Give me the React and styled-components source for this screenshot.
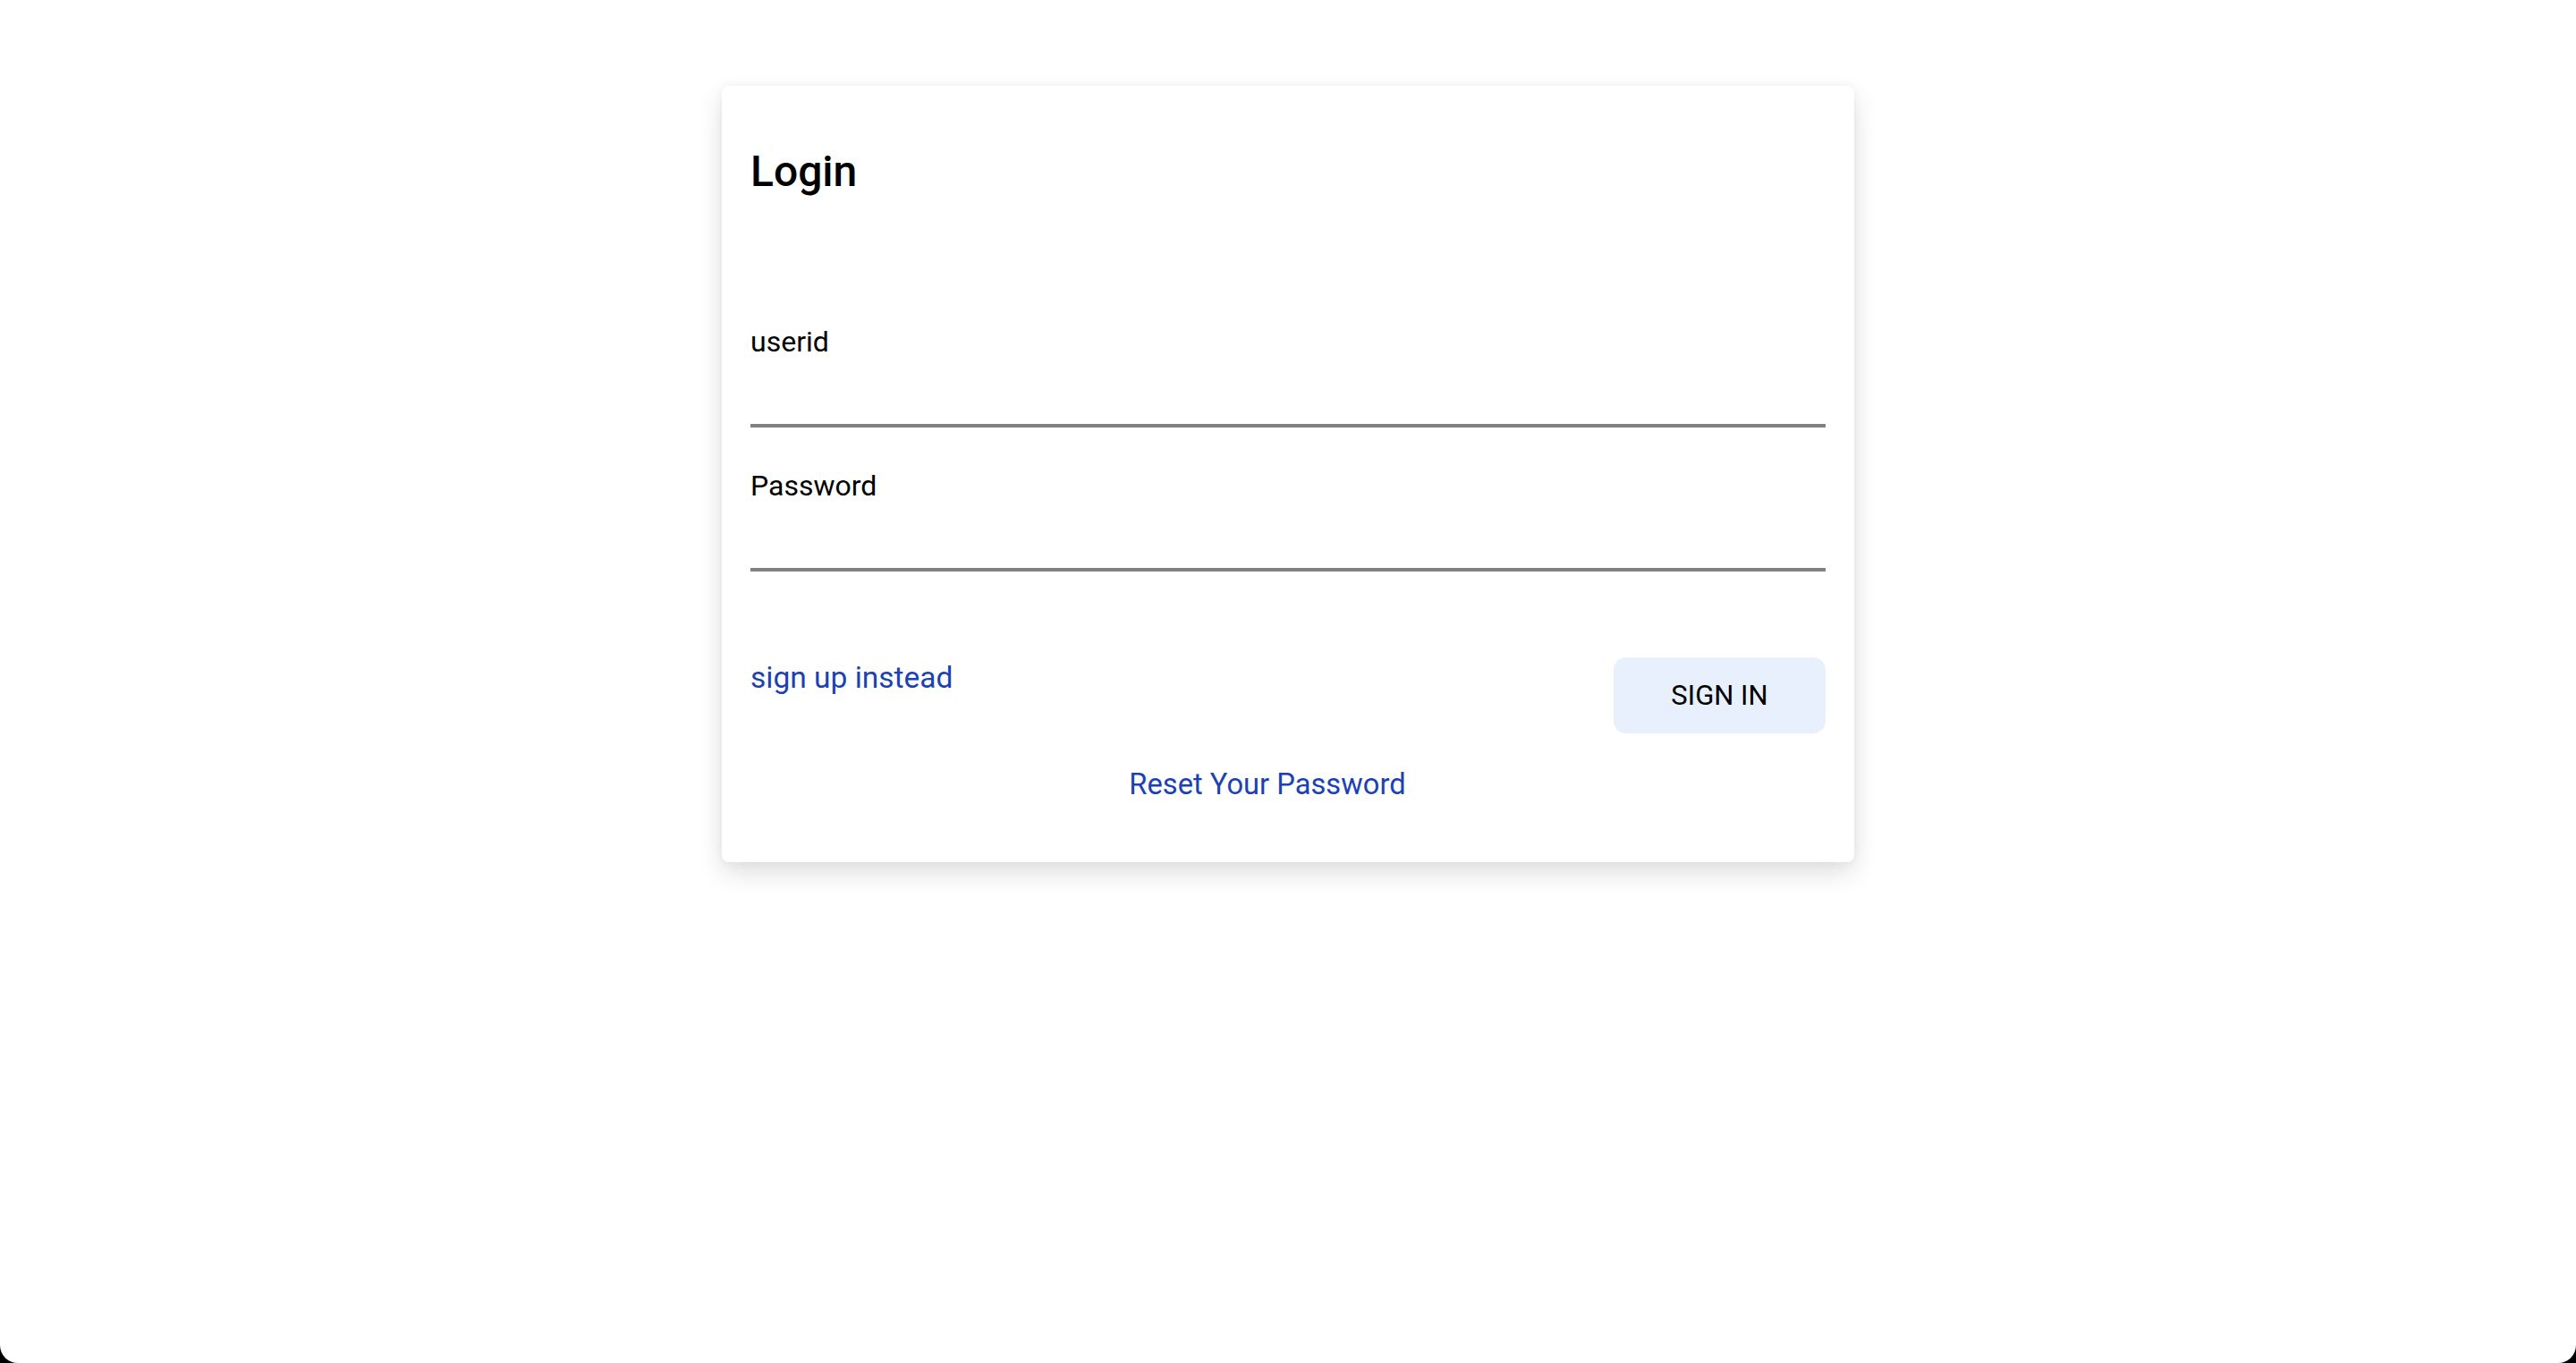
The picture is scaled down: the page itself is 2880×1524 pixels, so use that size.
import styled, { createGlobalStyle } from "styled-components";
import { useState } from "react";

const GlobalStyle = createGlobalStyle`
  html, body {
    margin: 0;
    padding: 0;
    background: #000;
  }
  * {
    box-sizing: border-box;
  }
`;

const Page = styled.div`
  height: 100vh;
  background: #fff;
  border-radius: 0 0 20px 20px;
  padding-top: 96px;
  font-family: Roboto, "Liberation Sans", sans-serif;
  color: #000;
`;

const Card = styled.form`
  width: 1266px;
  margin: 0 auto;
  background: #fff;
  border-radius: 8px;
  padding: 68px 32px 67px;
  box-shadow: 0 12px 28px rgba(0, 0, 0, 0.13), 0 0 12px rgba(0, 0, 0, 0.04);
  display: flex;
  flex-direction: column;
`;

const Title = styled.h2`
  margin: 0 0 142px;
  font-size: 48px;
  line-height: 56px;
  font-weight: 500;
`;

const Label = styled.label`
  font-size: 32px;
  line-height: 40px;
  margin-top: ${(props) => props.gap || 0}px;
`;

const Input = styled.input`
  width: 100%;
  height: 76px;
  border: none;
  border-bottom: 4px solid #808080;
  background: none;
  outline: none;
  font-size: 32px;
  font-family: inherit;
  padding: 0;
`;

const ActionRow = styled.div`
  display: flex;
  justify-content: space-between;
  align-items: flex-start;
  margin-top: 96px;
`;

const TextLink = styled.a`
  color: #1b42b5;
  text-decoration: none;
  font-size: ${(props) => props.size || 32}px;
  line-height: 40px;
  cursor: pointer;
`;

const SignUpLink = styled(TextLink)`
  margin-top: 3px;
`;

const SignInButton = styled.button`
  width: 237px;
  height: 85px;
  border: none;
  border-radius: 14px;
  background: #e8f0fe;
  color: #000;
  font-family: inherit;
  font-size: 31px;
  cursor: pointer;
`;

const ResetRow = styled.div`
  display: flex;
  justify-content: center;
  margin-top: 37px;
  padding-right: 46px;
`;

const App = () => {
  const [userid, setUserid] = useState("");
  const [password, setPassword] = useState("");

  return (
    <>
      <GlobalStyle />
      <Page>
        <Card onSubmit={(e) => e.preventDefault()}>
          <Title>Login</Title>
          <Label htmlFor="userid">userid</Label>
          <Input
            id="userid"
            value={userid}
            onChange={(e) => setUserid(e.target.value)}
          />
          <Label htmlFor="password" gap={45}>
            Password
          </Label>
          <Input
            id="password"
            type="password"
            value={password}
            onChange={(e) => setPassword(e.target.value)}
          />
          <ActionRow>
            <SignUpLink size={33.5}>sign up instead</SignUpLink>
            <SignInButton type="submit">SIGN IN</SignInButton>
          </ActionRow>
          <ResetRow>
            <TextLink size={32.7}>Reset Your Password</TextLink>
          </ResetRow>
        </Card>
      </Page>
    </>
  );
};

export default App;
